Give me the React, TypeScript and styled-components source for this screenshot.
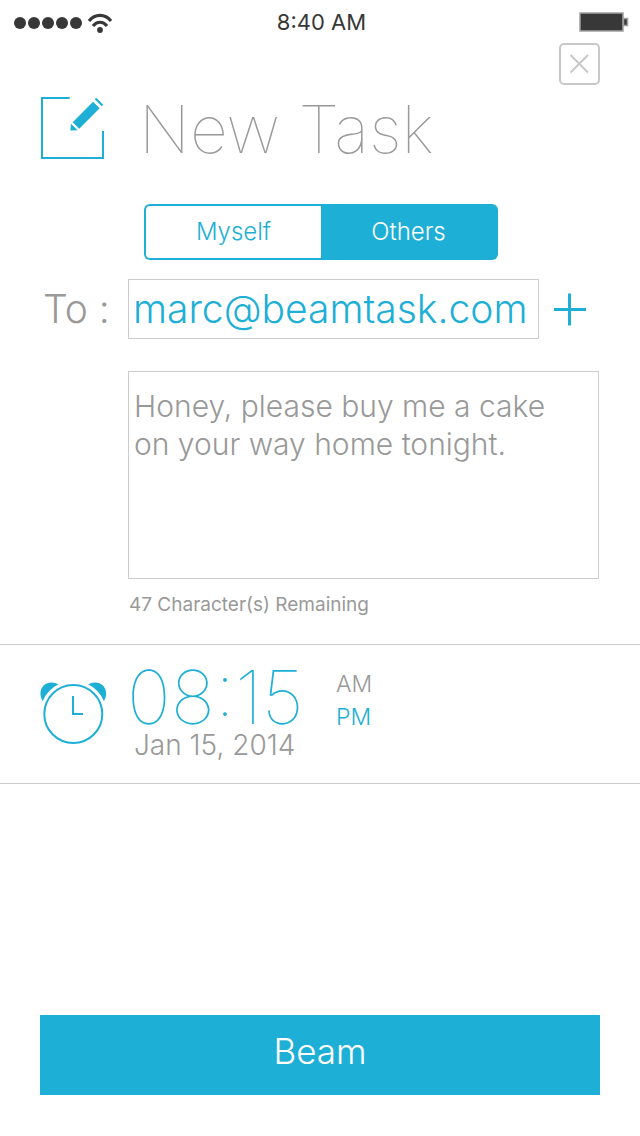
import React, { useState } from "react";
import styled, { createGlobalStyle } from "styled-components";

const BLUE = "#1eafd6";
const GREY = "#999999";
const DARK = "#383838";
const LINE = "#cccccc";

const GlobalStyle = createGlobalStyle`
  *, *::before, *::after { box-sizing: border-box; }
  body {
    margin: 0;
    background: #ffffff;
    color: ${GREY};
    font-family: Inter, "Liberation Sans", sans-serif;
    font-weight: 300;
  }
  button, input, textarea { font: inherit; color: inherit; margin: 0; }
  button { padding: 0; border: 0; background: none; cursor: pointer; }
`;

const Screen = styled.main`
  display: flex;
  flex-direction: column;
  min-height: 100vh;
`;

const StatusBar = styled.header`
  display: grid;
  grid-template-columns: 1fr auto 1fr;
  align-items: center;
  height: 43px;
  padding: 0 11px 0 14px;
  color: ${DARK};
`;

const Clock = styled.span`
  font-size: 22px;
  line-height: 28px;
  font-weight: 400;
`;

const Battery = styled.svg`
  justify-self: end;
`;

const CloseBar = styled.div`
  display: flex;
  justify-content: flex-end;
  padding: 0 40px;
`;

const CloseButton = styled.button`
  display: block;
  height: 42px;
`;

const TitleRow = styled.div`
  display: flex;
  align-items: center;
  gap: 33px;
  height: 96px;
  margin-top: -4px;
  padding: 0 40px;
`;

const Title = styled.h1`
  margin: 0;
  font-size: 66px;
  line-height: 84px;
  font-weight: 100;
`;

const Segmented = styled.div`
  display: grid;
  grid-template-columns: 1fr 1fr;
  height: 56px;
  margin: 27px 142px 0 144px;
`;

const Segment = styled.button<{ $active: boolean }>`
  border: 2px solid ${BLUE};
  font-size: 24px;
  line-height: 32px;
  background: ${(p) => (p.$active ? BLUE : "#ffffff")};
  color: ${(p) => (p.$active ? "#ffffff" : BLUE)};

  &:first-child {
    border-right: 0;
    border-radius: 6px 0 0 6px;
  }
  &:last-child {
    border-left: 0;
    border-radius: 0 6px 6px 0;
  }
`;

const Recipient = styled.div`
  display: grid;
  grid-template-columns: 88px 1fr 61px;
  align-items: center;
  margin: 19px 0 0;
  padding: 0 40px;
`;

const ToLabel = styled.label`
  padding-left: 3px;
  font-size: 39px;
  line-height: 48px;
  white-space: nowrap;
`;

const EmailInput = styled.input`
  width: 100%;
  min-width: 0;
  height: 60px;
  padding: 0 4px 2px;
  border: 1px solid ${LINE};
  border-radius: 0;
  background: #ffffff;
  color: ${BLUE};
  font-size: 39px;
  outline: none;
`;

const AddButton = styled.button`
  display: flex;
  padding-left: 14px;
`;

const Message = styled.div`
  display: flex;
  flex-direction: column;
  margin: 32px 41px 0 128px;
`;

const MessageBox = styled.textarea`
  display: block;
  width: 100%;
  height: 208px;
  padding: 15px 5px;
  border: 1px solid ${LINE};
  border-radius: 0;
  background: #ffffff;
  font-size: 30px;
  line-height: 38px;
  resize: none;
  overflow: hidden;
  outline: none;
`;

const Hint = styled.p`
  margin: 14px 0 0 1px;
  font-size: 19px;
  line-height: 24px;
  font-weight: 400;
`;

const Schedule = styled.section`
  display: flex;
  align-items: flex-start;
  height: 140px;
  margin-top: 27px;
  padding: 0 40px;
  border-top: 1px solid ${LINE};
  border-bottom: 1px solid ${LINE};
`;

const AlarmIcon = styled.svg`
  flex: none;
  margin: 35px 20px 0 0;
`;

const When = styled.div`
  display: flex;
  flex-direction: column;
  width: 209px;
`;

const Time = styled.time`
  color: ${BLUE};
  font-size: 74px;
  line-height: 72px;
  font-weight: 100;
  margin-top: 16px;
`;

const DateText = styled.time`
  padding-left: 7px;
  font-size: 28px;
  line-height: 24px;
`;

const Meridiem = styled.div`
  display: flex;
  flex-direction: column;
  margin-top: 23px;
`;

const MeridiemOption = styled.button<{ $active: boolean }>`
  font-size: 23px;
  line-height: 33px;
  text-align: left;
  color: ${(p) => (p.$active ? BLUE : GREY)};
`;

const Footer = styled.footer`
  margin-top: auto;
  padding: 40px 40px 41px;
`;

const BeamButton = styled.button`
  display: block;
  width: 100%;
  height: 80px;
  padding-bottom: 8px;
  background: ${BLUE};
  color: #ffffff;
  font-size: 35px;
  line-height: 44px;
`;

export default function App() {
  const [target, setTarget] = useState("Others");
  const [meridiem, setMeridiem] = useState("PM");

  return (
    <Screen>
      <GlobalStyle />
      <StatusBar>
        <svg width="100" height="22" viewBox="0 0 100 22" fill={DARK} aria-hidden="true">
          {[6, 20, 34, 48, 62].map((x) => (
            <circle key={x} cx={x} cy="12" r="6" />
          ))}
          <g fill="none" stroke={DARK} strokeWidth="3.200">
            <path d="M75 10C81 2.500 91 2.500 97 10" />
            <path d="M79 15C83 10 89 10 93 15" />
          </g>
          <circle cx="86" cy="19" r="2.900" />
        </svg>
        <Clock>8:40 AM</Clock>
        <Battery width="50" height="20" viewBox="0 0 50 20" aria-hidden="true">
          <rect x="1" y="1" width="43" height="18" fill={DARK} stroke="#a0a0a0" strokeWidth="1.500" />
          <rect x="44.500" y="6.500" width="4" height="7" fill={DARK} stroke="#a0a0a0" strokeWidth="1.500" />
        </Battery>
      </StatusBar>

      <CloseBar>
        <CloseButton aria-label="Close">
          <svg width="42" height="42" viewBox="0 0 42 42" fill="none" stroke="#c8c8c8" strokeWidth="2">
            <rect x="2" y="1" width="39" height="40" rx="4" />
            <path d="M12.500 12L30 29.500M30 12L12.500 29.500" />
          </svg>
        </CloseButton>
      </CloseBar>

      <TitleRow>
        <svg width="66" height="64" viewBox="0 0 66 64" fill="none" aria-hidden="true">
          <path d="M29.700 1H2V61H63V34" stroke={BLUE} strokeWidth="2" />
          <path d="M53 4.700L59.700 11.200L39.200 31.700L32.700 25.200Z" fill={BLUE} />
          <path d="M31 26.700L37.600 33.300L30.300 33.600Z" fill={BLUE} />
          <path d="M55.500 1.500L62.500 8.500" stroke={BLUE} strokeWidth="2.200" />
        </svg>
        <Title>New Task</Title>
      </TitleRow>

      <Segmented role="group" aria-label="Assign to">
        {["Myself", "Others"].map((name) => (
          <Segment
            key={name}
            $active={target === name}
            aria-pressed={target === name}
            onClick={() => setTarget(name)}
          >
            {name}
          </Segment>
        ))}
      </Segmented>

      <Recipient>
        <ToLabel htmlFor="email">To :</ToLabel>
        <EmailInput id="email" type="text" defaultValue="marc@beamtask.com" />
        <AddButton aria-label="Add recipient">
          <svg width="34" height="34" viewBox="0 0 34 34" stroke={BLUE} strokeWidth="3">
            <path d="M1 17.500H33M16.500 1.500V33.500" />
          </svg>
        </AddButton>
      </Recipient>

      <Message>
        <MessageBox
          aria-label="Message"
          spellCheck={false}
          defaultValue={"Honey, please buy me a cake\non your way home tonight."}
        />
        <Hint>47 Character(s) Remaining</Hint>
      </Message>

      <Schedule>
        <AlarmIcon width="67" height="66" viewBox="0 0 67 66" fill="none" aria-hidden="true">
          <circle cx="33.300" cy="34" r="29" stroke={BLUE} strokeWidth="2" />
          <path d="M33 16V34H43" stroke={BLUE} strokeWidth="2" />
          <path d="M2.700 21.300C-3 11 3 2.400 11.500 2.400C14.500 2.400 16.500 3.200 18.500 4.300A32.500 32.500 0 0 0 2.700 21.300Z" fill={BLUE} />
          <path d="M63.900 21.300C69.600 11 63.600 2.400 55.100 2.400C52.100 2.400 50.100 3.200 48.100 4.300A32.500 32.500 0 0 1 63.900 21.300Z" fill={BLUE} />
        </AlarmIcon>
        <When>
          <Time dateTime="20:15">08:15</Time>
          <DateText dateTime="2014-01-15">Jan 15, 2014</DateText>
        </When>
        <Meridiem role="group" aria-label="AM or PM">
          {["AM", "PM"].map((name) => (
            <MeridiemOption
              key={name}
              $active={meridiem === name}
              aria-pressed={meridiem === name}
              onClick={() => setMeridiem(name)}
            >
              {name}
            </MeridiemOption>
          ))}
        </Meridiem>
      </Schedule>

      <Footer>
        <BeamButton>Beam</BeamButton>
      </Footer>
    </Screen>
  );
}
